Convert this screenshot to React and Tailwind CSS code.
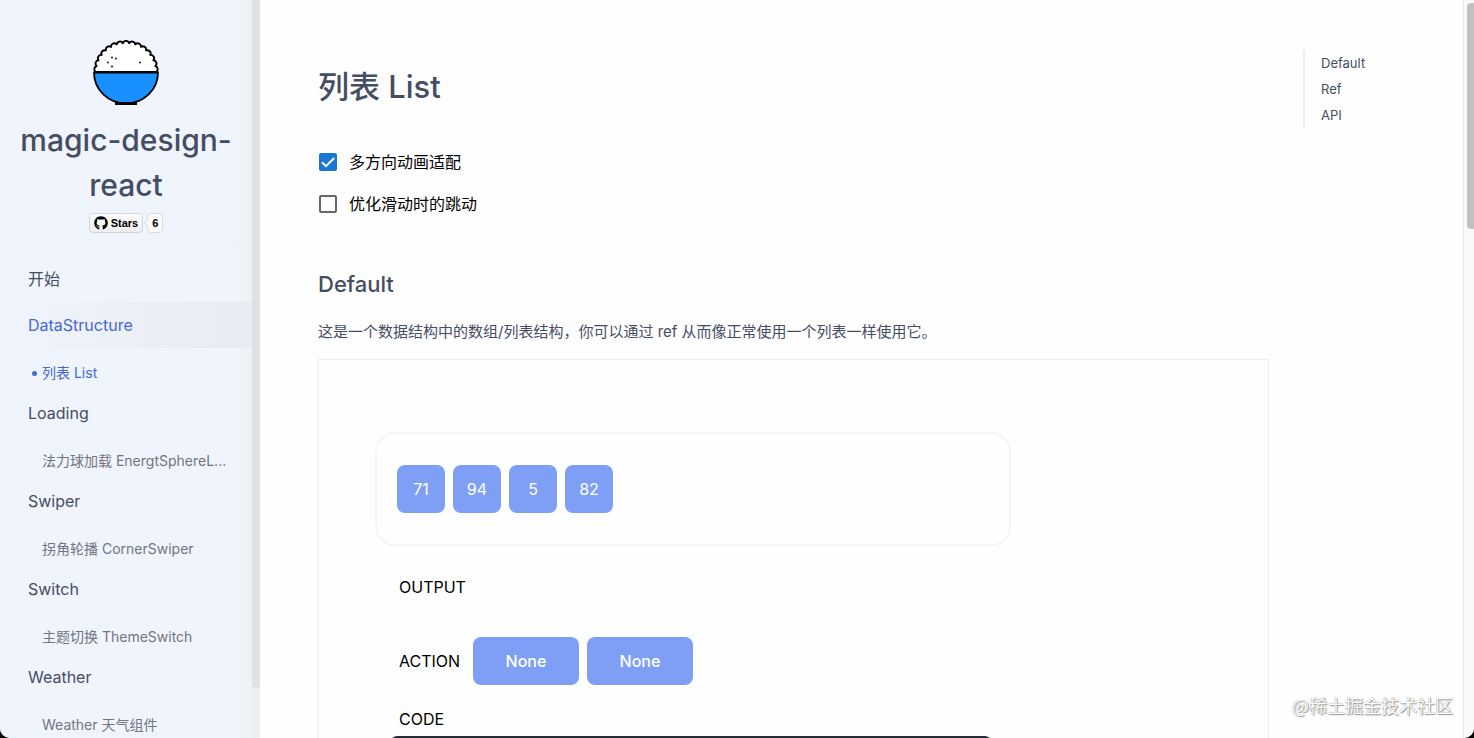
import { useState } from 'react'
import { FaGithub } from 'react-icons/fa'

const menu = [
  { title: '开始', children: [] },
  { title: 'DataStructure', active: true, children: [{ title: '列表 List', active: true }] },
  { title: 'Loading', children: [{ title: '法力球加载 EnergtSphereL...' }] },
  { title: 'Swiper', children: [{ title: '拐角轮播 CornerSwiper' }] },
  { title: 'Switch', children: [{ title: '主题切换 ThemeSwitch' }] },
  { title: 'Weather', children: [{ title: 'Weather 天气组件' }] },
]

const features = [
  { id: 'direction', label: '多方向动画适配', done: true },
  { id: 'scroll', label: '优化滑动时的跳动', done: false },
]

const toc = ['Default', 'Ref', 'API']
const numbers = [71, 94, 5, 82]

// Scalloped edge of the rice: small arcs laid along a half circle
const BUMPS = 15
const riceEdge = Array.from({ length: BUMPS + 1 }, (_, i) => {
  const angle = Math.PI - (Math.PI * i) / BUMPS
  const x = (33 + 30 * Math.cos(angle)).toFixed(2)
  const y = (32 - 29 * Math.sin(angle)).toFixed(2)
  return i === 0 ? `M${x} ${y}` : `A3.3 3.3 0 0 1 ${x} ${y}`
}).join(' ')

function RiceLogo() {
  return (
    <svg viewBox="0 0 66 66" className="w-[66px] h-[66px]" aria-hidden="true">
      <path d={`${riceEdge} Z`} fill="#fff" stroke="#000" strokeWidth="1.9" strokeLinejoin="round" />
      <path d="M1 32.5h64a32 31 0 0 1-64 0z" fill="#1890ff" stroke="#000" strokeWidth="1.8" />
      <path d="M22 62h22v3H22z" fill="#000" />
      <g fill="#000">
        <circle cx="19" cy="17.500" r="0.9" />
        <circle cx="23" cy="18.500" r="0.9" />
        <circle cx="15" cy="22.500" r="0.9" />
        <circle cx="19" cy="26.500" r="0.9" />
        <circle cx="47" cy="22.500" r="0.9" />
      </g>
    </svg>
  )
}

function StarBadge() {
  return (
    <div className="flex items-center gap-1 text-[11px] leading-none font-bold text-black font-['Liberation_Sans',sans-serif]">
      <a href="#stars" className="flex items-center gap-[3px] h-5 px-1 border border-[#d5d5d5] rounded-sm bg-linear-to-b from-[#fcfcfc] to-[#eeeeee]">
        <FaGithub className="w-3.5 h-3.5" />
        Stars
      </a>
      <a href="#stargazers" className="relative flex items-center h-5 px-1 border border-[#dcdcdc] rounded-sm bg-[#fafafa]">
        <span className="absolute -left-[3px] top-1.5 w-1.5 h-1.5 rotate-45 border-l border-b border-[#dcdcdc] bg-[#fafafa]" />
        6
      </a>
    </div>
  )
}

function Sidebar() {
  return (
    <aside className="flex w-[260px] shrink-0 h-full overflow-hidden bg-linear-to-r from-[#f0f4fc] from-90% to-[#eeeff1]">
      <div className="flex-1 min-w-0">
        <div className="flex flex-col items-center pt-10 h-[247px] border-b border-[#ebeff6]">
          <RiceLogo />
          <h1 className="mt-3 text-center text-[30px] leading-[45px] font-medium text-[#454d64]">magic-design-react</h1>
          <div className="mt-[5px]">
            <StarBadge />
          </div>
        </div>
        <nav className="pt-[9px]">
          <ul>
            {menu.map((group) => (
              <li key={group.title}>
                <a
                  href={`#${group.title}`}
                  className={`flex items-center h-[46px] pl-7 text-base ${
                    group.active ? 'text-[#4569d4] bg-linear-to-r from-[#f0f4fc] to-[#e8ebf1]' : 'text-[#454d64]'
                  }`}
                >
                  {group.title}
                </a>
                {group.children.map((item) => (
                  <a
                    key={item.title}
                    href={`#${item.title}`}
                    className={`flex items-center mt-2 h-[34px] text-sm whitespace-nowrap ${
                      item.active ? 'pl-8 gap-[5px] text-[#4569d4]' : 'pl-[42px] text-[#717484]'
                    }`}
                  >
                    {item.active && <span className="w-[5px] h-[5px] rounded-full bg-[#4569d4]" />}
                    {item.title}
                  </a>
                ))}
              </li>
            ))}
          </ul>
        </nav>
      </div>
      <div className="w-2">
        <div className="h-[688px] rounded-b-sm bg-[#dfe0e3]" />
      </div>
    </aside>
  )
}

function FeatureList() {
  const [checked, setChecked] = useState(features.filter((f) => f.done).map((f) => f.id))

  const toggle = (id) => {
    setChecked((prev) => (prev.includes(id) ? prev.filter((c) => c !== id) : [...prev, id]))
  }

  return (
    <ul className="mt-8">
      {features.map((f) => (
        <li key={f.id} className="flex items-center h-[42px]">
          <label htmlFor={f.id} className="flex items-center gap-3 pl-px text-base text-black">
            <span className="relative flex w-[18px] h-[18px]">
              <input
                id={f.id}
                type="checkbox"
                checked={checked.includes(f.id)}
                onChange={() => toggle(f.id)}
                className="peer appearance-none w-[18px] h-[18px] rounded-xs border-2 border-[#666666] checked:border-[#1976d2] checked:bg-[#1976d2]"
              />
              <svg viewBox="0 0 18 18" className="absolute inset-0 hidden peer-checked:block pointer-events-none" aria-hidden="true">
                <path d="M3 9.200l4 4L15.200 5" fill="none" stroke="#fff" strokeWidth="2" />
              </svg>
            </span>
            {f.label}
          </label>
        </li>
      ))}
    </ul>
  )
}

function ListDemo() {
  return (
    <div className="mt-[15px] h-[600px] border border-[#ebedf1] pl-14 pt-[72px]">
      <div className="flex items-center gap-2 w-[636px] h-[114px] pl-5 border-2 border-[#f5f5f6] rounded-[20px]">
        {numbers.map((n) => (
          <div key={n} className="flex items-center justify-center w-12 h-12 rounded-lg bg-[#7f9ff7] text-white text-base">
            {n}
          </div>
        ))}
      </div>
      <div className="pl-6 text-base text-black">
        <div className="mt-[29px]">OUTPUT</div>
        <div className="flex items-center mt-[38px]">
          <span className="w-[74px]">ACTION</span>
          <div className="flex gap-2">
            <button type="button" className="w-[106px] h-12 rounded-lg bg-[#7f9ff7] text-white font-medium">None</button>
            <button type="button" className="w-[106px] h-12 rounded-lg bg-[#7f9ff7] text-white font-medium">None</button>
          </div>
        </div>
        <div className="mt-[22px]">CODE</div>
      </div>
      <div className="mt-[5px] ml-4 w-[600px] h-40 rounded-md bg-[#282c34]" />
    </div>
  )
}

function App() {
  return (
    <div className="h-screen bg-black font-['Inter','Noto_Sans_CJK_SC',sans-serif]">
      <div className="relative flex h-full overflow-hidden rounded-b-[10px] bg-[#fefefe]">
        <Sidebar />

        <main className="flex flex-1 min-w-0 h-full overflow-hidden pl-[58px]">
          <article className="flex-1 min-w-0 pt-16 text-[#454d64]">
            <h1 className="text-[31px] leading-[45px] font-medium">列表 List</h1>
            <FeatureList />
            <h2 className="mt-[41px] text-[22px] leading-9 font-medium">Default</h2>
            <p className="mt-[17px] text-[15px] leading-[25px]">
              这是一个数据结构中的数组/列表结构，你可以通过 ref 从而像正常使用一个列表一样使用它。
            </p>
            <ListDemo />
          </article>

          <ul className="ml-[34px] mt-[50px] w-40 h-[78px] border-l-2 border-[#ebedf1] pl-4 text-[13px] leading-[26px] text-[#454d64]">
            {toc.map((t) => (
              <li key={t}>
                <a href={`#${t}`}>{t}</a>
              </li>
            ))}
          </ul>
        </main>

        {/* Page scrollbar */}
        <div className="w-[11px] shrink-0 border-l border-[#e8e8e8] bg-[#fafafa] pt-[3px] pl-[3px]">
          <div className="h-[226px] rounded-l bg-[#c2c2c2]" />
        </div>

        <div className="absolute right-[21px] bottom-[19px] text-lg leading-7 text-white [text-shadow:0_0_1px_#777,1px_1px_1px_#999] font-['Noto_Sans_CJK_SC',sans-serif]">
          @稀土掘金技术社区
        </div>
      </div>
    </div>
  )
}

export default App
